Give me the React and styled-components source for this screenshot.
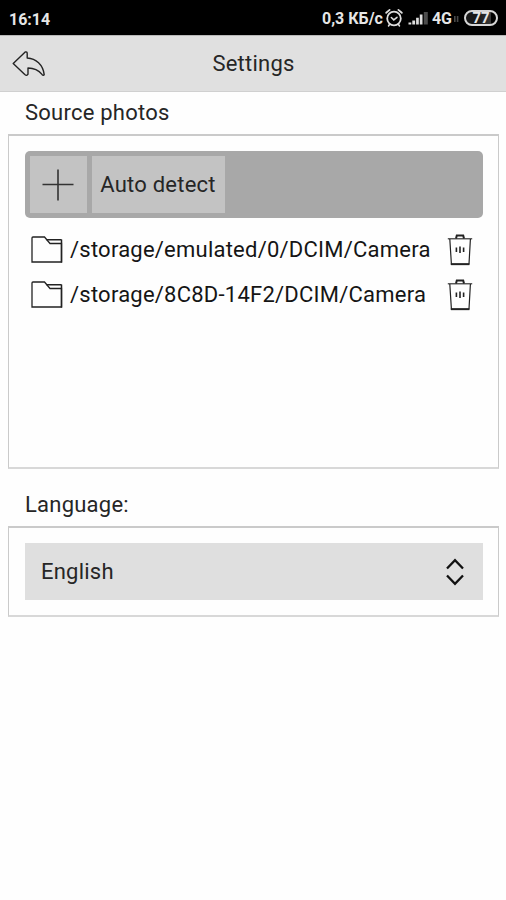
import React from "react";
import styled, { createGlobalStyle } from "styled-components";

const GlobalStyle = createGlobalStyle`
  * { box-sizing: border-box; }
  body { margin: 0; background: #fefefe; }
  button { font: inherit; color: inherit; letter-spacing: inherit; border: 0; padding: 0; }
  svg { display: block; flex: none; }
`;

const Screen = styled.div`
  display: flex;
  flex-direction: column;
  width: 506px;
  height: 900px;
  overflow: hidden;
  background: #fefefe;
  color: #262626;
  font-family: Roboto, "Liberation Sans", sans-serif;
  font-size: 22px;
  line-height: 26px;
  letter-spacing: 0.23px;
`;

const StatusBar = styled.div`
  flex: none;
  display: flex;
  justify-content: space-between;
  height: 36px;
  padding: 1px 8px 0 9px;
  background: #000;
  border-bottom: 1px solid #b8b8b8;
  color: #e6e6e6;
`;

const StatusText = styled.span`
  font-size: ${(p) => p.$size || 16}px;
  line-height: ${(p) => p.$line || 36}px;
  font-weight: 700;
  letter-spacing: 0;
  white-space: nowrap;
`;

const StatusGroup = styled.div`
  display: flex;
  align-items: center;
`;

const Header = styled.header`
  flex: none;
  display: grid;
  grid-template-columns: 60px 1fr 59px;
  align-items: center;
  height: 56px;
  background: #e0e0e0;
  border-bottom: 1px solid #d0d0d0;
`;

const BackButton = styled.button`
  display: flex;
  padding-left: 12px;
  background: none;
`;

const Title = styled.h1`
  margin: 0;
  font: inherit;
  text-align: center;
`;

const SectionLabel = styled.h2`
  flex: none;
  margin: 0;
  padding: ${(p) => p.$top}px 0 0 25px;
  height: ${(p) => p.$height}px;
  font: inherit;
`;

const Panel = styled.section`
  flex: none;
  height: ${(p) => p.$height}px;
  margin: 0 7px 0 8px;
  padding: 15px 15px 15px 16px;
  border: 1px solid #cacaca;
  border-top-width: 2px;
  border-bottom: 2px solid #d8d8d8;
`;

const Toolbar = styled.div`
  display: flex;
  gap: 5px;
  width: 458px;
  height: 67px;
  padding: 5px;
  border-radius: 5px;
  background: #a8a8a8;
`;

const ToolButton = styled.button`
  display: flex;
  align-items: center;
  justify-content: center;
  width: ${(p) => p.$width}px;
  padding-right: 1px;
  background: #c3c3c3;
`;

const FolderList = styled.ul`
  margin: 9px 0 0;
  padding: 0 9px 0 6px;
  list-style: none;
`;

const FolderRow = styled.li`
  display: flex;
  align-items: center;
  height: 45px;
`;

const FolderPath = styled.span`
  flex: 1;
  padding-left: 7px;
  color: #151515;
  white-space: nowrap;
`;

const DeleteButton = styled.button`
  padding-right: 1px;
  background: none;
`;

const Select = styled.button`
  display: flex;
  align-items: center;
  justify-content: space-between;
  width: 458px;
  height: 57px;
  padding: 0 18px 0 16px;
  background: #dfdfdf;
`;

const AlarmIcon = () => (
  <svg width="23" height="20" viewBox="-2 0 23 20" fill="none" stroke="#dedede" strokeLinecap="round">
    <circle cx="9" cy="10.5" r="6.8" strokeWidth="1.8" />
    <path d="M1.2 4.8 4.6 1.9M16.8 4.8 13.4 1.9" strokeWidth="1.8" />
    <path d="M6.3 9.5 8.8 11.9 12 9.3M4.5 16.5 3.5 18M13.5 16.5 14.5 18" strokeWidth="1.5" />
  </svg>
);

const SignalIcon = () => (
  <svg width="26" height="16" viewBox="0 0 26 16" fill="#dedede">
    <path d="M2.5 12.5h2.8v2H2.5zM6.3 10.5h2.8v4H6.3zM10.1 7.8h2.7v6.7h-2.7zM13.8 4.5h2.7v10h-2.7z" />
    <path d="M17.8 2h4v12.5h-4z" fill="#4c4c4c" />
  </svg>
);

const DataIcon = () => (
  <svg width="7" height="10" viewBox="0 -2 7 10" fill="#484848">
    <path d="M2 1h1.6v6H2zM4.8 1h1.6v6H4.8z" />
  </svg>
);

const Battery = styled.div`
  display: flex;
  align-items: center;
  justify-content: center;
  width: 34px;
  height: 16px;
  margin-left: 5px;
  border: 2px solid #d6d6d6;
  border-radius: 8px;
  background: linear-gradient(90deg, #181818 40%, #3a3a3a 84%, #000 84%);
`;

const BackIcon = () => (
  <svg width="34" height="28" viewBox="0 0 34 28" fill="none" stroke="#242424" strokeWidth="1.4" strokeLinejoin="round">
    <path d="M1.2 13.5 13.2 2Q15.2 1.4 15.2 3.5V8C24 8.5 31 14.5 32.2 24.6Q31.5 26 30 24.4C26 19.4 22 18 16 18V24.2Q14.8 26.4 12.8 24.6Z" />
  </svg>
);

const PlusIcon = () => (
  <svg width="32" height="32" viewBox="0 0 32 32" stroke="#333" strokeWidth="1.6">
    <path d="M16 .5v31M.5 15.5h31" />
  </svg>
);

const FolderIcon = () => (
  <svg width="32" height="28" viewBox="0 0 32 28" fill="none" stroke="#222" strokeWidth="1.3">
    <path d="M1 26V2Q1 1 2 1H13.5L19 7.5H30.5V26Z" />
    <path d="M15.5 3.8H30.5M30.5 3.5V26.5" strokeWidth="1.5" />
  </svg>
);

const TrashIcon = () => (
  <svg width="26" height="32" viewBox="0 0 26 32" fill="none" stroke="#222">
    <path d="M.8 4.8h24.4" strokeWidth="1.1" />
    <path d="M2.8 5 4.4 30H22L23.4 5" strokeWidth="1.2" />
    <path d="M9 4.5 9.8 1.5h6.4l.8 3" strokeWidth="2" />
    <path d="M3.8 30.2h18.6" strokeWidth="1.9" />
    <path d="M9.4 13.5v4.5M13 12.5v6.5M16.6 13.5v4.5" strokeWidth="1.6" />
  </svg>
);

const ChevronsIcon = () => (
  <svg width="20" height="28" viewBox="0 0 20 28" fill="none" stroke="#111" strokeWidth="2.3">
    <path d="M2 10.5 10 2.2 18 10.5M2 17.5 10 25.8 18 17.5" />
  </svg>
);

const folders = [
  "/storage/emulated/0/DCIM/Camera",
  "/storage/8C8D-14F2/DCIM/Camera",
];

export default function App() {
  return (
    <Screen>
      <GlobalStyle />
      <StatusBar>
        <StatusText $line={37}>16:14</StatusText>
        <StatusGroup>
          <StatusText $line={37}>0,3 КБ/с</StatusText>
          <AlarmIcon />
          <SignalIcon />
          <StatusText $line={37}>4G</StatusText>
          <DataIcon />
          <Battery>
            <StatusText $size={15}>77</StatusText>
          </Battery>
        </StatusGroup>
      </StatusBar>
      <Header>
        <BackButton aria-label="Back"><BackIcon /></BackButton>
        <Title>Settings</Title>
      </Header>
      <SectionLabel $top={8} $height={42}>Source photos</SectionLabel>
      <Panel $height={335}>
        <Toolbar>
          <ToolButton $width={57} aria-label="Add folder"><PlusIcon /></ToolButton>
          <ToolButton $width={133}>Auto detect</ToolButton>
        </Toolbar>
        <FolderList>
          {folders.map((path) => (
            <FolderRow key={path}>
              <FolderIcon />
              <FolderPath>{path}</FolderPath>
              <DeleteButton aria-label="Delete"><TrashIcon /></DeleteButton>
            </FolderRow>
          ))}
        </FolderList>
      </Panel>
      <SectionLabel $top={23} $height={57}>Language:</SectionLabel>
      <Panel $height={91}>
        <Select>
          English
          <ChevronsIcon />
        </Select>
      </Panel>
    </Screen>
  );
}
